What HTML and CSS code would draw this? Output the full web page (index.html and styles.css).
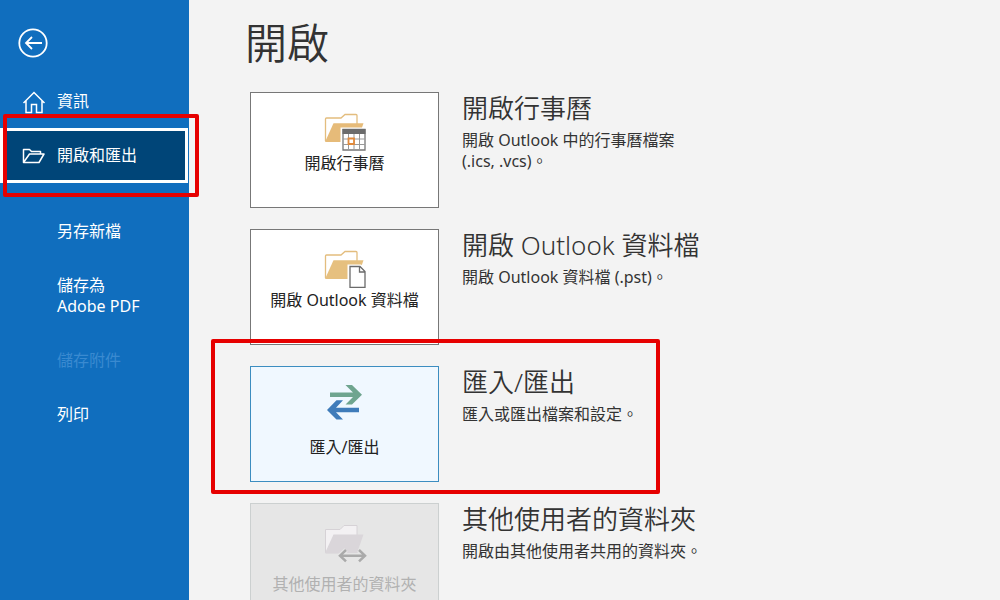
FILE: index.html
```html
<!DOCTYPE html>
<html lang="zh-Hant">
<head>
  <meta charset="utf-8">
  <title>開啟</title>
  <link rel="stylesheet" href="styles.css">
</head>
<body>

  <!-- Sidebar -->
  <nav class="sidebar">
    <button class="back" type="button" aria-label="返回">
      <svg width="30" height="30" viewBox="0 0 30 30" fill="none" stroke="currentColor" stroke-width="1.8">
        <circle cx="15" cy="15" r="13.7"/>
        <path d="M24 15H8M14 9l-6 6 6 6"/>
      </svg>
    </button>

    <a class="nav-item" href="#">
      <svg class="nav-icon" width="24" height="24" viewBox="0 0 24 24" fill="none" stroke="currentColor" stroke-width="1.5">
        <path d="M1.5 13L12 2.5 22.5 13M4 11v11.500h5.500v-8h5v8H20V11"/>
      </svg>
      <span>資訊</span>
    </a>
    <a class="nav-item selected" href="#">
      <svg class="nav-icon" width="24" height="24" viewBox="0 0 24 24" fill="none" stroke="currentColor" stroke-width="1.5" stroke-linejoin="round">
        <path d="M1.500 18.500V5.500h6l2 2h9V10M1.500 18.500L7.500 10H22l-5 8.500z"/>
      </svg>
      <span>開啟和匯出</span>
      <span class="marker marker-nav"></span>
    </a>
    <div class="nav-group">
      <a class="nav-item" href="#"><span>另存新檔</span></a>
      <a class="nav-item" href="#"><span>儲存為<br>Adobe PDF</span></a>
      <a class="nav-item disabled" href="#" aria-disabled="true"><span>儲存附件</span></a>
      <a class="nav-item" href="#"><span>列印</span></a>
    </div>
  </nav>

  <!-- Content -->
  <main class="content">
    <h1>開啟</h1>

    <div class="options">
      <section class="option">
        <button class="tile" type="button">
          <svg width="43" height="40" viewBox="0 0 43 40">
            <path d="M2.500 29V7q0-1 1-1H18l4-3.500h11q1 0 1 1V12" fill="#fff" stroke="#e3bd7e" stroke-width="1.300"/>
            <path d="M10.500 11.300H40.500L34 30H2z" fill="#e6bb79"/>
            <path d="M17.500 15.500H43V40H17.500z" fill="#fff"/>
            <path d="M20 17.500H42V38H20z" fill="#fff" stroke="#777" stroke-width="1.300"/>
            <path d="M25.500 22V38M31 22V38M36.500 22V38M20 27H42M20 32.500H42" stroke="#999" fill="none"/>
            <path d="M19.500 17H42.500V22H19.500z" fill="#6b6b6b"/>
            <path d="M25.500 26.500H31V32H25.500z" fill="#fff" stroke="#e08a3c" stroke-width="1.800"/>
          </svg>
          <span>開啟行事曆</span>
        </button>
        <div class="info">
          <h2>開啟行事曆</h2>
          <p>開啟 Outlook 中的行事曆檔案 (.ics, .vcs)。</p>
        </div>
      </section>

      <section class="option">
        <button class="tile" type="button">
          <svg width="43" height="40" viewBox="0 0 43 40">
            <path d="M2.500 29V7q0-1 1-1H18l4-3.500h11q1 0 1 1V12" fill="#fff" stroke="#e3bd7e" stroke-width="1.300"/>
            <path d="M10.500 11.300H40.500L34 30H2z" fill="#e6c07f"/>
            <path d="M24.500 15.500H38L43 20V40H24.500z" fill="#fff"/>
            <path d="M27 17.500H37L42 22.500V38.300H27zM36.500 17.500V23H42" fill="#fff" stroke="#6b6b6b" stroke-width="1.300"/>
          </svg>
          <span>開啟 Outlook 資料檔</span>
        </button>
        <div class="info">
          <h2>開啟 Outlook 資料檔</h2>
          <p>開啟 Outlook 資料檔 (.pst)。</p>
        </div>
      </section>

      <section class="option">
        <button class="tile spaced active" type="button">
          <svg width="43" height="40" viewBox="0 0 43 40">
            <path d="M22.500-1H29L39 8.700 29 18.500H22.500L30 11H7V6.500H30z" fill="#6fa58f"/>
            <path d="M20 14.300H13.500L4 24l9.500 9.500H20L13 26.300H36V21.700H13z" fill="#3f7cba"/>
          </svg>
          <span>匯入/匯出</span>
        </button>
        <div class="info">
          <h2>匯入/匯出</h2>
          <p>匯入或匯出檔案和設定。</p>
        </div>
        <span class="marker marker-option"></span>
      </section>

      <section class="option">
        <button class="tile spaced" type="button" disabled>
          <svg width="43" height="40" viewBox="0 0 43 40">
            <path d="M2.500 30V6.500H17L21 2.500H34V30z" fill="#f3f1f3" stroke="#d6d2d6"/>
            <path d="M10.500 11.500H40.500L34 30H2z" fill="#dad6da"/>
            <path d="M18 32.700H41M23 27l-6 5.700 6 5.700M36 27l6 5.700-6 5.700" fill="none" stroke="#e6e6e6" stroke-width="5"/>
            <path d="M18 32.700H41M23 27l-6 5.700 6 5.700M36 27l6 5.700-6 5.700" fill="none" stroke="#aaa" stroke-width="2.500"/>
          </svg>
          <span>其他使用者的資料夾</span>
        </button>
        <div class="info">
          <h2>其他使用者的資料夾</h2>
          <p>開啟由其他使用者共用的資料夾。</p>
        </div>
      </section>
    </div>
  </main>

</body>
</html>
```

FILE: styles.css
```css
* {
  box-sizing: border-box;
}
body {
  display: flex;
  min-height: 100vh;
  margin: 0;
  font-family: "Noto Sans", "Noto Sans CJK TC", sans-serif;
  font-size: 16px;
  line-height: 21px;
  color: #333;
  background-color: #f3f3f3;
}
h1, h2, p {
  margin: 0;
}
button {
  font: inherit;
  color: inherit;
  cursor: pointer;
}
svg {
  display: block;
  flex-shrink: 0;
  overflow: visible;
}

/* Sidebar */
.sidebar {
  flex: 0 0 189px;
  padding-top: 28px;
  color: white;
  background-color: #106ebe;
}
.back {
  display: block;
  margin: 0 0 17px 18px;
  padding: 0;
  border: none;
  background: none;
}
.nav-item {
  display: flex;
  align-items: center;
  position: relative;
  padding: 16px 8px 16px 57px;
  color: white;
  text-decoration: none;
}
.nav-icon {
  margin: -2px 11px -2px -35px;
}
.nav-item.selected {
  margin-right: 1px;
  padding: 14px 8px 14px 54px;
  border: 3px solid white;
  background-color: #004578;
}
.nav-item.disabled {
  color: #3a8ad0;
}
.nav-group {
  display: flex;
  flex-direction: column;
  gap: 1px;
  margin-top: 22px;
}

/* Content */
.content {
  flex: 1;
  padding: 15px 24px 20px 56px;
}
h1 {
  margin-bottom: 21px;
  font-size: 42px;
  font-weight: 350;
  line-height: 56px;
}
.options {
  display: flex;
  flex-direction: column;
  gap: 21px;
  margin-left: 5px;
}
.option {
  display: flex;
  position: relative;
  gap: 23px;
}
.tile {
  display: flex;
  flex-direction: column;
  align-items: center;
  gap: 1px;
  flex: 0 0 189px;
  height: 116px;
  padding: 19px 0 0;
  border: 1px solid #777;
  color: #222;
  background-color: white;
}
.tile.spaced {
  gap: 11px;
}
.tile.active {
  border-color: #3c8dc0;
  background-color: #f0f8ff;
}
.tile:disabled {
  border-color: #ccd0d0;
  color: #b1b1b1;
  background-color: #e6e6e6;
  cursor: default;
}
.info {
  max-width: 244px;
}
h2 {
  margin-bottom: 6px;
  font-size: 26px;
  font-weight: 350;
  line-height: 32px;
}

/* Red highlight frames */
.marker {
  position: absolute;
  border: 4px solid #e60000;
  border-radius: 2px;
  pointer-events: none;
}
.marker-nav {
  top: -17px;
  right: -14px;
  bottom: -17px;
  left: 0;
}
.marker-option {
  top: -27px;
  bottom: -12px;
  left: -39px;
  width: 449px;
}
```
